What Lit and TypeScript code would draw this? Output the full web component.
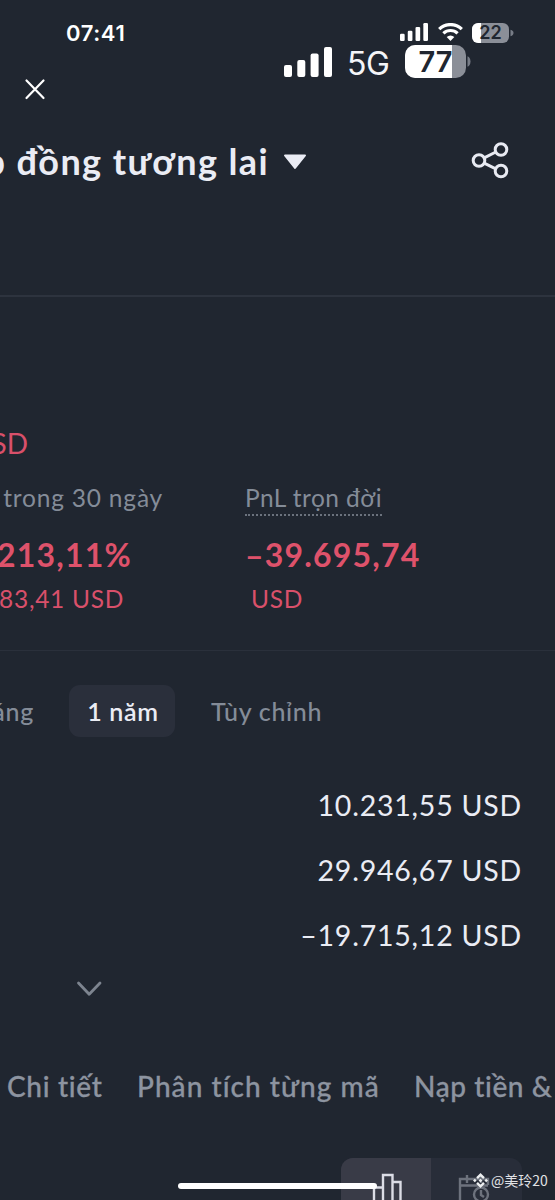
import { LitElement, html, css } from "lit";
import { customElement } from "lit/decorators.js";

@customElement("app-root")
export class AppRoot extends LitElement {
  static styles = css`
    :host {
      display: flex;
      flex-direction: column;
      position: relative;
      box-sizing: border-box;
      width: 555px;
      height: 1200px;
      overflow: hidden;
      background: #202630;
      color: #eaecf4;
      font-family: Lato, "Noto Sans", sans-serif;
      font-variant-ligatures: none;
      white-space: nowrap;
    }
    svg { display: block; flex: none; }
    .status { display: flex; height: 66px; box-sizing: border-box; padding: 18px 41px 0 66px; justify-content: space-between; color: #fff; font: 600 22px/30px Inter, sans-serif; letter-spacing: 0.6px; flex: none; }
    .phone { display: flex; gap: 9.5px; padding-top: 5px; }
    .overlay { position: absolute; left: 284px; top: 41px; display: flex; align-items: center; color: #f4f5f8; font: 400 32px/40px Inter, sans-serif; }
    .net { margin: 3px 0 0 15px; width: 58px; letter-spacing: -0.5px; }
    .overlay .strength { margin-top: -2px; }
    .overlay .cell { margin-top: -2px; }
    .batt { font-family: Inter, sans-serif; font-weight: 600; letter-spacing: 0; }
    .close { height: 58px; padding: 12px 0 0 24px; box-sizing: border-box; flex: none; }
    .head { display: flex; align-items: center; height: 75px; flex: none; padding-right: 46px; }
    .cut { display: flex; justify-content: flex-end; flex: none; }
    .title { width: 269px; font-size: 36px; line-height: 44px; font-weight: 700; letter-spacing: 1.4px; margin-top: -1px; }
    .caret { margin-left: 14px; }
    .share { margin-left: auto; margin-top: -3px; }
    .balance { height: 180px; border-top: 2px solid #2d333e; margin-top: 96px; box-sizing: border-box; padding-top: 129px; color: #d9506a; flex: none; }
    .balance .cut { width: 28px; font-size: 28px; line-height: 34px; }
    .stats { display: grid; grid-template-columns: 245px 1fr; height: 176px; box-sizing: border-box; padding-top: 6px; flex: none; border-bottom: 1px solid #2a303b; }
    .label { font-size: 24.5px; line-height: 33px; color: #848c98; }
    .a .label { width: 163px; letter-spacing: 0.8px; border-bottom: 2px solid transparent; }
    .b .label { width: fit-content; border-bottom: 2px dotted #6b727d; letter-spacing: 0.45px; }
    .big { font-size: 32px; line-height: 40px; font-weight: 700; color: #de526b; margin-top: 19px; letter-spacing: 1.2px; }
    .a .big { width: 132px; }
    .sub { font-size: 24.5px; line-height: 30px; color: #d9506a; margin-top: 9px; letter-spacing: 0.7px; }
    .a .sub { width: 124px; }
    .b .sub { padding-left: 6px; }
    .periods { display: flex; align-items: center; height: 52px; margin-top: 34px; flex: none; font-size: 25px; letter-spacing: 0.7px; color: #848c98; font-weight: 500; }
    .periods .cut { width: 34px; }
    .year { margin-left: 35px; width: 106px; height: 52px; line-height: 52px; border-radius: 11px; background: #2a2f3b; color: #eaecf4; text-align: center; font-weight: 600; box-sizing: border-box; padding-left: 2px; }
    .custom { margin-left: 36px; }
    .amounts { display: flex; flex-direction: column; align-items: flex-end; padding: 36px 33px 0 0; font-size: 28.5px; letter-spacing: 0.78px; line-height: 65px; flex: none; }
    .chev { padding: 13px 0 0 76px; flex: none; }
    .tabs { display: flex; margin-top: 69px; padding-left: 7px; font-size: 28px; line-height: 40px; font-weight: 500; color: #8d94a0; flex: none; -webkit-text-stroke: 0.3px #8d94a0; }
    .t1 { width: 130px; letter-spacing: 0.7px; }
    .t2 { width: 277px; letter-spacing: 1.05px; }
    .t3 { letter-spacing: 0.6px; }
    .switch { display: flex; flex: none; width: 181px; height: 60px; margin: 52px 0 0 341px; border-radius: 12px; overflow: hidden; background: #282d39; }
    .on { width: 90px; background: #393b47; padding: 15px 0 0 30px; box-sizing: border-box; }
    .off { padding: 15px 0 0 26px; }
    .home { position: absolute; left: 178px; top: 1183px; width: 199px; height: 6px; border-radius: 3px; background: #fff; }
    .mark { position: absolute; left: 473px; top: 1170px; display: flex; align-items: center; gap: 3px; color: #e2e3e6; font: 400 14px/20px "Noto Sans CJK SC", sans-serif; }
  `;

  battery(level: number, w: number, h: number, fill: number, size: number) {
    const id = "b" + level;
    return html`<svg class="cell" width=${w + 5} height=${h} viewBox="0 0 ${w + 5} ${h}">
      <defs><clipPath id=${id}><rect width=${w} height=${h} rx=${h * 0.31}></rect></clipPath></defs>
      <g clip-path="url(#${id})">
        <rect width=${w} height=${h} fill="#8b8f98"></rect>
        <rect width=${fill} height=${h} fill="#fff"></rect>
      </g>
      <path d="M${w + 1.5} ${h * 0.34}q3 ${h * 0.04} 3 ${h * 0.16}t-3 ${h * 0.16}z" fill="#777c86"></path>
      <text class="batt" x=${w / 2} y=${h / 2 + size * 0.36} text-anchor="middle" font-size=${size} fill="#202630">${level}</text>
    </svg>`;
  }

  bars(w: number, h: number) {
    return html`<svg class="strength" width=${w} height=${h} viewBox="0 0 48 30" preserveAspectRatio="none" fill="#fff">
      <rect x="0" y="18" width="8" height="12" rx="2"></rect>
      <rect x="13.3" y="13" width="8" height="17" rx="2"></rect>
      <rect x="26.6" y="6.5" width="8" height="23.5" rx="2"></rect>
      <rect x="40" y="0" width="8" height="30" rx="2"></rect>
    </svg>`;
  }

  render() {
    return html`
      <div class="status">
        <span>07:41</span>
        <div class="phone">
          ${this.bars(28, 18)}
          <svg width="25" height="18" viewBox="0 0 25 18" fill="none" stroke="#fff" stroke-width="3.2">
            <path d="M1.2 6.2a16 16 0 0 1 22.6 0M5.4 10.4a10.2 10.2 0 0 1 14.2 0"></path>
            <path d="M12.5 18l-3.8-3.9a5.5 5.5 0 0 1 7.6 0z" fill="#fff" stroke="none"></path>
          </svg>
          ${this.battery(22, 37, 20, 9, 18)}
        </div>
      </div>
      <div class="overlay">
        ${this.bars(48, 30)}<span class="net">5G</span>${this.battery(77, 61, 33, 47, 29)}
      </div>
      <div class="close">
        <svg width="22" height="22" viewBox="0 0 22 22" stroke="#fff" stroke-width="2.2" stroke-linecap="round"><path d="M2.5 2.5l17 17.5M19.5 2.5l-17 17.5"></path></svg>
      </div>
      <div class="head">
        <div class="cut title">Hợp đồng tương lai</div>
        <svg class="caret" width="24" height="16" viewBox="0 0 24 16"><path d="M2 1.5h20L12 14z" fill="#eaecf4" stroke="#eaecf4" stroke-width="2" stroke-linejoin="round"></path></svg>
        <svg class="share" width="38" height="38" viewBox="0 0 38 38" fill="none" stroke="#e8eaf2" stroke-width="3">
          <circle cx="8" cy="19.5" r="5.8"></circle><circle cx="30" cy="8.5" r="5.8"></circle><circle cx="30" cy="30" r="5.8"></circle>
          <path d="M13.2 16.8l11.6-5.8M13.2 22.2l11.6 5.6"></path>
        </svg>
      </div>
      <div class="balance"><div class="cut">USD</div></div>
      <div class="stats">
        <div class="a">
          <div class="cut label">PnL trong 30 ngày</div>
          <div class="cut big">–213,11%</div>
          <div class="cut sub">–83,41 USD</div>
        </div>
        <div class="b">
          <div class="label">PnL trọn đời</div>
          <div class="big">–39.695,74</div>
          <div class="sub">USD</div>
        </div>
      </div>
      <div class="periods">
        <div class="cut">tháng</div><div class="year">1 năm</div><div class="custom">Tùy chỉnh</div>
      </div>
      <div class="amounts"><div>10.231,55 USD</div><div>29.946,67 USD</div><div>–19.715,12 USD</div></div>
      <div class="chev">
        <svg width="27" height="16" viewBox="0 0 27 16" fill="none" stroke="#7d848f" stroke-width="2.8" stroke-linecap="round" stroke-linejoin="round"><path d="M2.5 2L13.2 13.3L24 2"></path></svg>
      </div>
      <div class="tabs"><span class="t1">Chi tiết</span><span class="t2">Phân tích từng mã</span><span class="t3">Nạp tiền &amp;</span></div>
      <div class="switch">
        <div class="on"><svg width="32" height="34" viewBox="0 0 32 34" fill="none" stroke="#dcdde6" stroke-width="2.4"><path d="M3 34V14.500h9M12 34V2h9.500v32M21.500 9h8v25"></path></svg></div>
        <div class="off"><svg width="34" height="34" viewBox="0 0 34 34" fill="none" stroke="#6d727d" stroke-width="2.400"><path d="M12 32H3V6h28v6M3 12.500h28M10 2v8M24 2v8"></path><circle cx="24" cy="21.500" r="7"></circle><path d="M24 17v5l3 2"></path></svg></div>
      </div>
      <div class="home"></div>
      <div class="mark">
        <svg width="15" height="15" viewBox="0 0 16 16" fill="#eceef0"><path d="M8 0l4.600 4.600-1.800 1.800L8 3.600 5.200 6.400 3.400 4.600zM8 16l-4.600-4.600 1.800-1.800L8 12.400l2.800-2.800 1.800 1.800zM0 8l1.900-1.900L3.800 8 1.900 9.900zM12.200 8l1.900-1.900L16 8l-1.900 1.900zM8 6l2 2-2 2-2-2z"></path></svg>
        <span>@美玲20</span>
      </div>
    `;
  }
}
